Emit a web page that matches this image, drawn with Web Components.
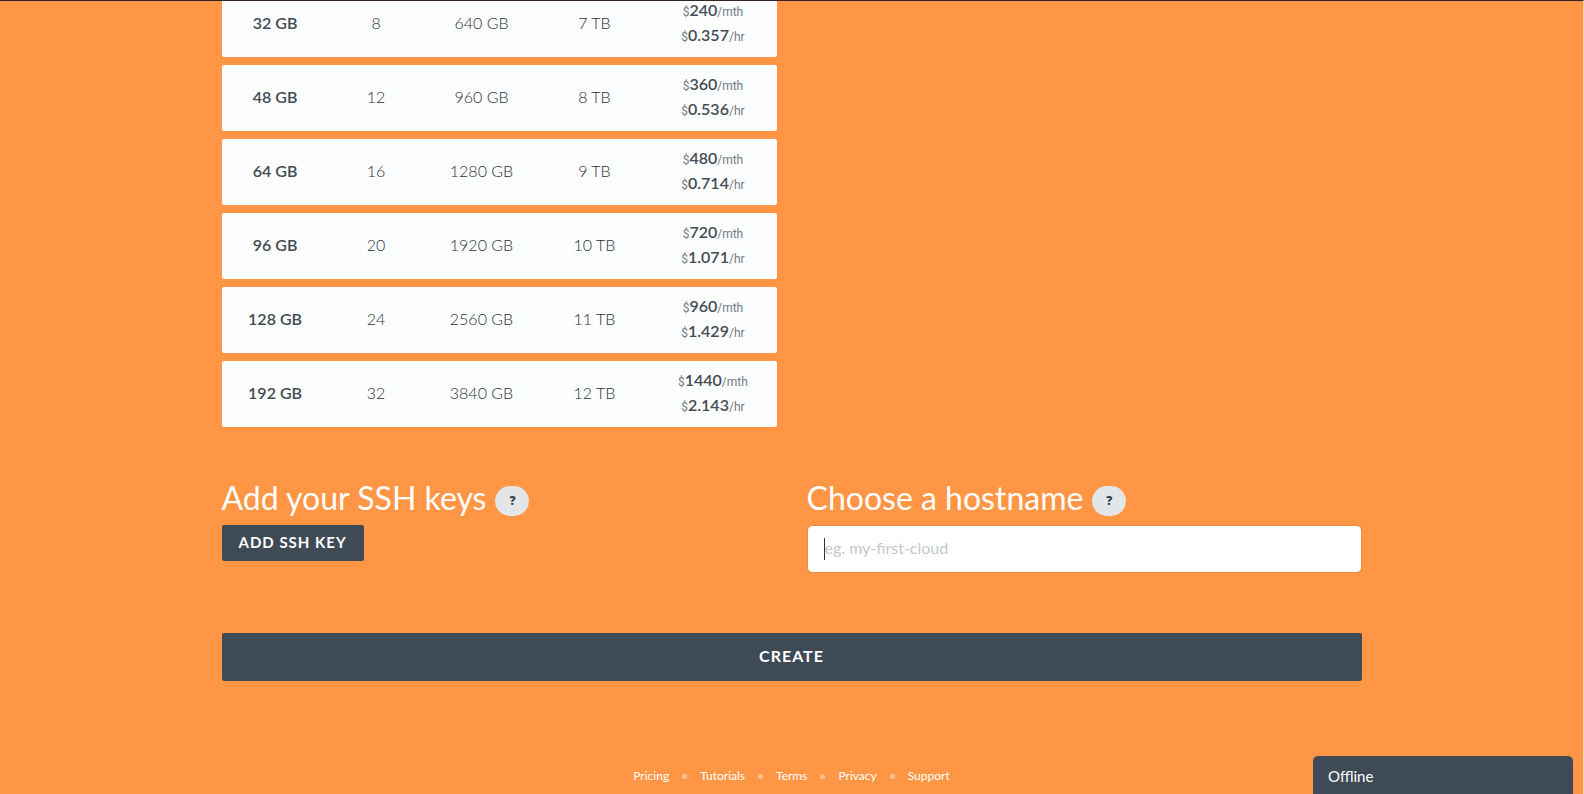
<!DOCTYPE html>
<html lang="en">
<head>
<meta charset="utf-8">
<title>Create a server</title>
<style>
  html { background: #ff9645; }
  body {
    margin: 0;
    font-family: Lato, "Open Sans", sans-serif;
    font-size: 16px;
    color: #454b52;
  }
</style>
</head>
<body>
<deploy-page></deploy-page>

<script>
const define = (name, html, setup) => {
  const template = document.createElement('template');
  template.innerHTML = html;
  customElements.define(name, class extends HTMLElement {
    connectedCallback() {
      if (this.shadowRoot) return;
      const root = this.attachShadow({ mode: 'open' });
      root.append(template.content.cloneNode(true));
      if (setup) setup(this, root);
    }
  });
};

const PLANS = [
  ['32 GB', '8', '640 GB', '7 TB', '240', '0.357'],
  ['48 GB', '12', '960 GB', '8 TB', '360', '0.536'],
  ['64 GB', '16', '1280 GB', '9 TB', '480', '0.714'],
  ['96 GB', '20', '1920 GB', '10 TB', '720', '1.071'],
  ['128 GB', '24', '2560 GB', '11 TB', '960', '1.429'],
  ['192 GB', '32', '3840 GB', '12 TB', '1440', '2.143']
];

define('plan-table', `
  <style>
    :host { display: block; }
    table {
      width: 100%;
      table-layout: fixed;
      border-collapse: separate;
      border-spacing: 0 8px;
      text-align: center;
    }
    .memory { width: 19.3%; }
    .cpu { width: 17.1%; }
    .disk { width: 20.9%; }
    .transfer { width: 19.8%; }
    .price { width: 22.9%; }
    th, td { box-sizing: border-box; height: 66px; padding: 0 0 3px; background: #fcfdff; font-weight: 300; }
    td { color: #2c3036; }
    th { font-weight: 600; border-radius: 2px 0 0 2px; }
    td:last-child { padding: 1px 0 0; border-radius: 0 2px 2px 0; }
    p { margin: 0; font: 400 12px/25px Roboto, sans-serif; color: #747982; }
    strong { font: 600 16px/16px Lato, sans-serif; color: #454b52; }
  </style>
  <table aria-label="Plans">
    <colgroup><col class="memory"><col class="cpu"><col class="disk"><col class="transfer"><col class="price"></colgroup>
    <tbody></tbody>
  </table>`, (host, root) => {
  root.querySelector('tbody').innerHTML = PLANS.map(([ram, cpu, disk, transfer, month, hour]) =>
    `<tr><th scope="row">${ram}</th><td>${cpu}</td><td>${disk}</td><td>${transfer}</td>` +
    `<td><p>$<strong>${month}</strong>/mth</p><p>$<strong>${hour}</strong>/hr</p></td></tr>`).join('');
});

define('form-section', `
  <style>
    :host { display: block; }
    header { display: flex; align-items: flex-end; gap: 9px; margin-bottom: 9px; }
    h2 { margin: 0; font-size: 32px; line-height: 36px; font-weight: 400; color: #fff; white-space: nowrap; }
    button {
      width: 34px; height: 30px; padding: 0; border: 0; border-radius: 15px;
      background: #e3e6e8; color: #3b424b;
      font: 800 12px/30px "Open Sans", sans-serif;
    }
  </style>
  <header><h2><slot name="title"></slot></h2><button type="button" aria-label="Help">?</button></header>
  <slot></slot>`);

define('action-button', `
  <style>
    :host { display: block; }
    button {
      height: 36px; padding: 0 17px 2px; border: 0; border-radius: 2px;
      background: #3f4a57; color: #fff;
      font: 700 15px/34px Lato, sans-serif;
      letter-spacing: 1px; text-transform: uppercase;
    }
    :host([block]) button { width: 100%; height: 48px; font-size: 16px; line-height: 46px; }
  </style>
  <button type="button"><slot></slot></button>`);

define('hostname-field', `
  <style>
    :host { display: block; position: relative; }
    input {
      display: block; box-sizing: border-box; width: 100%; height: 48px;
      padding: 0 17px 3px; border: 1px solid #ea8b42; border-radius: 5px;
      background: #fff; background-clip: padding-box; color: #454b52;
      font: 400 16px/24px Lato, sans-serif; outline: 0; caret-color: transparent;
    }
    input::placeholder { color: #c3c8cd; opacity: 1; }
    .caret { position: absolute; left: 17px; top: 13px; width: 1px; height: 22px; background: #30343a; }
  </style>
  <input type="text" aria-label="Hostname" placeholder="eg. my-first-cloud">
  <span class="caret"></span>`);

define('footer-links', `
  <style>
    :host { display: block; }
    ul { display: flex; justify-content: center; margin: 0; padding: 0; list-style: none; }
    li { display: flex; align-items: center; font-size: 12px; line-height: 18px; }
    li + li::before { content: ""; width: 5px; height: 5px; margin: 0 13px; border-radius: 50%; background: #ffc08e; }
    a { color: #fff; text-decoration: none; }
  </style>
  <nav><ul>
    <li><a href="#pricing">Pricing</a></li>
    <li><a href="#tutorials">Tutorials</a></li>
    <li><a href="#terms">Terms</a></li>
    <li><a href="#privacy">Privacy</a></li>
    <li><a href="#support">Support</a></li>
  </ul></nav>`);

define('chat-tab', `
  <style>
    :host { display: block; position: fixed; right: 11px; bottom: 0; width: 260px; }
    button {
      display: block; width: 100%; height: 38px; padding: 3px 15px 0; border: 0;
      border-radius: 5px 5px 0 0; background: #3f4a57; color: #fff;
      font: 400 15px/35px Lato, sans-serif; text-align: left;
    }
  </style>
  <button type="button"><slot></slot></button>`);

define('deploy-page', `
  <style>
    :host {
      display: block; box-sizing: border-box; min-height: 100vh; overflow: hidden;
      border-top: 1px solid #33232a; border-right: 1px solid #ffd2a6;
    }
    main { max-width: 1140px; margin: 0 auto; padding: 0 16px; }
    .columns { display: grid; grid-template-columns: 1fr 1fr; column-gap: 30px; }
    plan-table { margin-top: -18px; }
    .forms { margin: 45px 0 60px; }
    footer-links { margin-top: 86px; padding-bottom: 9px; }
  </style>
  <main>
    <div class="columns"><plan-table></plan-table></div>
    <div class="columns forms">
      <form-section>
        <span slot="title">Add your SSH keys</span>
        <action-button>Add SSH key</action-button>
      </form-section>
      <form-section>
        <span slot="title">Choose a hostname</span>
        <hostname-field></hostname-field>
      </form-section>
    </div>
    <action-button block>Create</action-button>
    <footer-links></footer-links>
  </main>
  <chat-tab>Offline</chat-tab>`);
</script>
</body>
</html>
